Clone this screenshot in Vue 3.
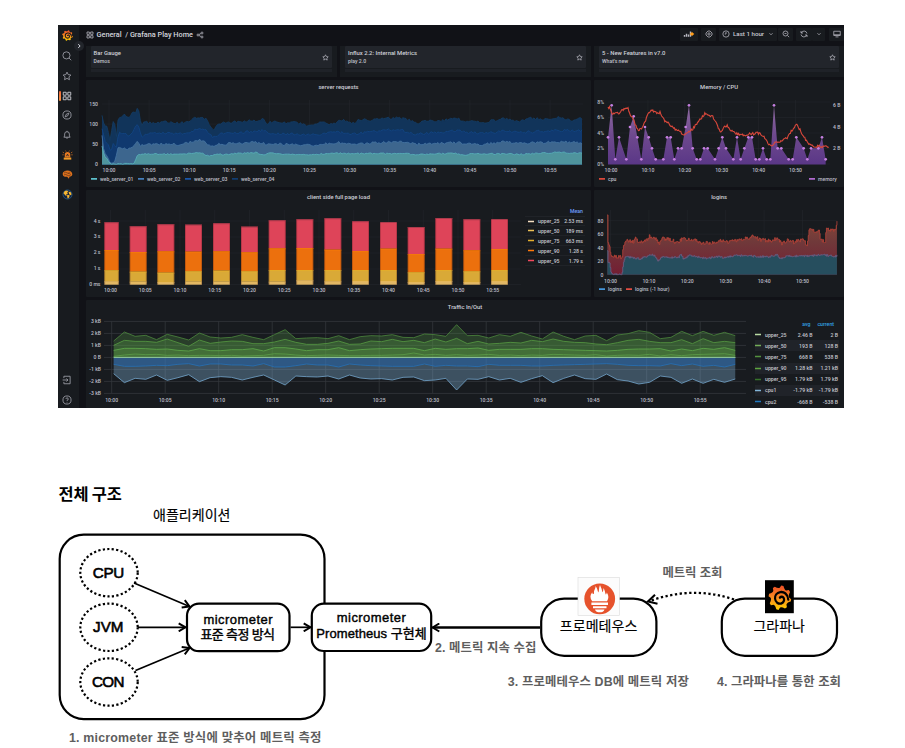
<script setup>
function noise(seed) {
  let s = seed
  return () => {
    s = (s * 16807) % 2147483647
    return s / 2147483647 - 0.5
  }
}
const pairs = (t) => t.trim().split(/\s+/).map((p) => p.split(',').map(Number))
const place = (pts, ox, oy) => pts.map(([x, y]) => [ox + x / 3, oy + y / 3])
function at(pts, x) {
  for (let i = 1; i < pts.length; i++) {
    if (x <= pts[i][0]) {
      const [a, b] = [pts[i - 1], pts[i]]
      return a[1] + ((b[1] - a[1]) * (x - a[0])) / (b[0] - a[0])
    }
  }
  return pts[pts.length - 1][1]
}
const line = (pts) => 'M' + pts.map(([x, y]) => x.toFixed(2) + ' ' + y.toFixed(2)).join('L')
const area = (pts, base) => line(pts) + `L${pts[pts.length - 1][0]} ${base}L${pts[0][0]} ${base}Z`
function rough(pts, step, amp, seed) {
  const r = noise(seed)
  const out = []
  const end = pts[pts.length - 1][0]
  for (let x = pts[0][0]; x <= end; x += step) out.push([x, at(pts, x) + r() * amp])
  return out
}
function steps(pts, base) {
  const out = []
  pts.forEach(([x, y], i) => {
    if (i) out.push([x, Math.min(base, out[out.length - 1][1])])
    out.push([x, Math.min(base, y)])
  })
  return out
}

/* server requests */
const serverShapes = [
  ['138,290 145,322 152,318 158,345 163,362 170,305 176,310 180,358 187,290 205,285 220,292 228,280 238,278 243,266 248,268 252,300 257,318 265,306 290,310 325,306 350,310 390,308 405,300 420,294 435,290 445,294 455,303 465,318 473,332 480,318 500,306 530,308 550,303 600,303 620,296 630,312 650,305 700,310 720,308 745,314 765,318 790,306 820,312 840,308 850,300 870,303 892,310 912,298 952,300 992,295 1032,293 1062,300 1082,310 1122,302 1152,302 1202,295 1227,306 1252,300 1277,310 1302,303 1342,297 1392,304 1422,293 1452,298 1512,292 1542,302 1567,293 1581,298', '#11345a', '#143d66'],
  ['138,330 148,365 158,375 165,400 172,370 180,385 188,340 205,338 215,348 230,340 243,312 248,320 256,350 270,340 380,341 405,334 430,325 450,330 473,353 490,342 540,338 620,332 640,340 765,344 850,337 900,342 992,329 1042,332 1080,343 1200,333 1280,341 1340,334 1400,337 1500,331 1581,332', '#10396f', '#134685'],
  ['138,350 145,405 152,404 160,428 175,430 185,385 205,384 215,390 235,380 243,360 252,378 270,371 380,373 405,366 432,360 450,368 470,380 490,373 600,366 630,372 765,376 850,368 900,373 992,366 1032,364 1080,373 1200,368 1280,373 1340,366 1400,371 1500,364 1581,369', '#3d668e', '#4676a5'],
  ['138,380 146,412 152,412 160,430 175,432 232,432 245,406 255,402 380,403 432,397 460,409 480,404 600,398 620,405 650,398 680,404 765,403 850,400 992,401 1032,400 1080,404 1200,400 1215,406 1250,401 1340,402 1400,403 1500,397 1581,400', '#4f949d', '#59b2bd'],
]
const server = serverShapes.map(([t, fill, stroke], i) => {
  const p = rough(place(pairs(t), 56, 20), 1.6, i === 3 ? 1.4 : 2.6, 77 + i * 31).map(([x, y]) => [x, Math.min(y, 164.3)])
  return { fill, stroke, area: area(p, 164.4), line: line(p) }
})
const serverTicks = Array.from({ length: 12 }, (_, i) => ({ x: 109 + i * 40.1, t: '10:' + String(i * 5).padStart(2, '0') }))
const serverLegend = [
  { x: 91, c: '#5cc0cb', t: 'web_server_01' },
  { x: 138, c: '#447ebc', t: 'web_server_02' },
  { x: 185, c: '#1a56a8', t: 'web_server_03' },
  { x: 232, c: '#113c70', t: 'web_server_04' },
]

/* memory and cpu */
const memory = place(pairs('54,352 65,256 76,418 87,352 109,418 120,321 131,289 142,352 154,418 165,321 176,352 186,385 197,418 220,418 231,352 242,352 253,418 264,385 275,385 287,321 297,256 308,385 320,418 331,418 342,385 353,385 375,418 386,385 397,352 408,385 430,418 441,352 452,418 463,385 475,352 486,352 497,418 508,418 519,385 530,418 541,418 552,256 563,385 574,385 596,418 608,418 619,352 641,385 652,418 663,385 685,385 696,352 707,418'), 590, 20)
const cpu = rough(place(pairs('54,265 60,260 65,282 75,278 85,282 100,268 112,262 120,280 130,300 142,330 155,328 165,305 172,285 185,270 200,280 210,278 222,300 235,310 250,325 265,330 280,345 290,340 305,330 315,318 330,300 345,280 355,285 370,292 380,312 392,338 400,322 412,318 425,332 440,342 460,345 480,342 500,340 512,340 525,355 535,372 545,378 560,365 575,362 590,355 600,340 610,325 620,313 630,330 645,355 655,370 675,378 690,380 718,380'), 590, 20), 0.8, 2.6, 911)
const memoryTicks = ['10:00', '10:10', '10:20', '10:30', '10:40', '10:50'].map((t, i) => ({ t, x: 611 + i * 36.9 }))

/* page load */
const lefts = [104.3, 129.7, 157.3, 185, 213, 241, 268.7, 296.3, 324.3, 352, 380, 407.7, 435.3, 463.3, 491]
const tops = [
  [112, 124, 118, 119, 115, 125, 106, 103, 100, 109, 111, 126, 99, 103, 102],
  [195, 201, 199, 200, 199, 202, 190, 189, 194, 198, 191, 207, 191, 196, 192],
  [256, 260, 263, 259, 257, 259, 255, 255, 255, 255, 255, 262, 255, 259, 255],
  [289, 290, 291, 290, 290, 290, 290, 286, 289, 288, 288, 291, 288, 291, 288],
]
const barFill = ['#de4459', '#ec700d', '#d9a937', '#e1b765']
const barEdge = ['#a83a4b', '#f57a08', '#e5ae2c', '#e5b75c']
const bars = lefts.flatMap((x, i) =>
  tops.map((row, k) => {
    const y = 185 + row[i] / 3
    const bottom = k < 3 ? 185 + tops[k + 1][i] / 3 : 284.7
    return { x, y, w: i ? 17 : 14.5, h: bottom - y, f: barFill[k], e: barEdge[k] }
  })
)
const loadTicks = Array.from({ length: 12 }, (_, i) => ({ x: 110.5 + i * 34.75, t: '10:' + String(i * 5).padStart(2, '0') }))
const loadRows = [
  ['#f5dfc3', 'upper_25', '2.53 ms'],
  ['#edbf55', 'upper_50', '189 ms'],
  ['#e5ae2c', 'upper_75', '663 ms'],
  ['#ff780a', 'upper_90', '1.28 s'],
  ['#f2495c', 'upper_95', '1.79 s'],
]

/* logins */
const hourAgo = steps(rough(place(pairs('52,95 53,175 58,182 62,210 68,215 95,217 99,190 105,165 120,168 130,172 136,158 142,168 165,170 178,153 190,158 200,165 206,178 215,160 245,165 260,175 275,162 295,165 310,162 330,176 370,172 395,166 410,172 435,166 470,160 490,154 510,164 540,168 560,160 575,176 595,165 610,172 640,163 650,185 655,148 658,132 675,140 686,133 691,165 705,172 708,134 738,135 740,108 742,118'), 590, 185), 0.7, 3.6, 313), 274.7)
const logins = steps(rough(place(pairs('52,200 53,232 58,232 62,262 68,268 95,270 101,225 108,216 130,218 150,222 175,211 192,210 204,229 215,217 265,217 273,208 280,222 296,212 350,221 385,214 400,219 440,211 480,213 530,216 560,210 570,222 590,214 640,213 700,210 735,214 742,209'), 590, 185), 0.7, 2, 522), 274.7)
const loginTicks = ['10:00', '10:10', '10:20', '10:30', '10:40', '10:50'].map((t, i) => ({ t, x: 610.5 + i * 38.4 }))

/* traffic */
const nums = (t) => t.split(' ').map(Number)
const u95 = nums('138 111 124 121 134 118 126 135 114 126 129 127 119 127 134 119 104 131 129 128 131 122 134 125 122 123 119 127 128 117 119 124 89 122 121 129 119 124 112 123 132 111 124 134 123 121 137 120 116 107 112 131 127 109 122 109 121 112 122')
const u90 = nums('151 136 139 139 142 132 143 154 135 145 141 138 139 146 146 141 133 142 148 148 145 138 148 147 138 140 133 140 136 143 132 141 130 146 139 147 145 142 144 136 140 132 139 142 143 147 149 143 136 133 139 143 143 134 146 131 143 139 143')
const u75 = nums('166 160 160 161 163 162 166 168 161 167 167 164 164 161 168 158 158 162 167 164 164 158 167 164 162 161 160 160 160 167 160 163 161 161 159 166 163 163 163 161 161 163 164 165 166 167 168 166 163 162 162 161 168 162 167 160 163 158 166')
const u50 = nums('184 180 177 179 178 181 180 182 181 181 182 181 183 182 181 176 177 180 182 181 180 181 182 182 181 181 180 179 174 180 178 181 179 181 180 178 181 180 182 180 181 178 179 180 181 179 183 181 180 181 178 183 179 182 179 178 177 176 181')
const col = (arr, f = (y) => y) => arr.map((y, i) => [113.67 + i * 10.717, 295 + f(y) / 3])
const flip = (y) => 374 - y
const traffic = [
  { p: col(u95), f: '#5a9e4a', o: 0.27, s: '#4d883e' },
  { p: col(u90), f: '#5a9e4a', o: 0.3, s: '#579a43' },
  { p: col(u75), f: '#5fa047', o: 0.3, s: '#5fa94b' },
  { p: col(u50), f: '#5fa047', o: 0.12, s: '#5c9d49' },
  { p: col(u95, flip), f: '#7fb2d8', o: 0.36, s: '#75a7ce' },
  { p: col(u75, flip), f: '#1f60a8', o: 0.5, s: '#2671b8' },
].map((t) => ({ ...t, area: area(t.p, 357.4), line: line(t.p) }))
const trafficTicks = Array.from({ length: 12 }, (_, i) => ({ x: 111.7 + i * 53.5, t: '10:' + String(i * 5).padStart(2, '0') }))
const trafficRows = [
  ['#b9dba3', 'upper_25', '2.46 B', '2 B'],
  ['#73ad58', 'upper_50', '193 B', '128 B'],
  ['#54923f', 'upper_75', '668 B', '538 B'],
  ['#5da53f', 'upper_90', '1.28 kB', '1.21 kB'],
  ['#37732b', 'upper_95', '1.79 kB', '1.79 kB'],
  ['#82b5d8', 'cpu1', '-1.79 kB', '-1.79 kB'],
  ['#1f78c1', 'cpu2', '-668 B', '-538 B'],
]

const cards = [
  { title: 'Bar Gauge', sub: 'Demos' },
  { title: 'Influx 2.2: Internal Metrics', sub: 'play 2.0' },
  { title: '5 - New Features in v7.0', sub: "What's new" },
]
const star = 'M8 1.8L9.9 5.8L14.2 6.4L11.1 9.5L11.9 13.9L8 11.8L4.1 13.9L4.9 9.5L1.8 6.4L6.1 5.8Z'
const apps = 'M2 2h4.7v4.7H2zM9.3 2H14v4.7H9.3zM2 9.3h4.7V14H2zM9.3 9.3H14V14H9.3z'
const nav = [
  { name: 'search', d: 'M12.8 7a5.7 5.7 0 1 1-11.4 0a5.7 5.7 0 0 1 11.4 0M11.3 11.3L14.8 14.8' },
  { name: 'star', d: star },
  { name: 'apps', d: apps, on: true },
  { name: 'compass', d: 'M14.5 8a6.5 6.5 0 1 1-13 0a6.5 6.5 0 0 1 13 0M11 5L9.2 9.2L5 11L6.8 6.8Z' },
  { name: 'bell', d: 'M3 11.5H13L11.8 9.5V6.5a3.8 3.8 0 0 0-7.6 0V9.5ZM8 1.3V2.7M6.3 12a1.8 1.8 0 0 0 3.4 0' },
]
const foot = [
  { name: 'signin', d: 'M3 5V2H13V14H3V11M1 8H9.5M7 5.5L9.5 8L7 10.5' },
  { name: 'help', d: 'M14.5 8a6.5 6.5 0 1 1-13 0a6.5 6.5 0 0 1 13 0M6.2 6.3a1.9 1.9 0 1 1 1.9 2.1V9.3M8 11V12' },
]

/* grafana mark in a 32 unit box */
const gear = (() => {
  const n = 8
  let d = ''
  for (let i = 0; i < n; i++) {
    const a = (i * 2 * Math.PI) / n - 1.35
    const pt = (r, k) => (16 + r * Math.cos(a + k)).toFixed(1) + ' ' + (16 + r * Math.sin(a + k)).toFixed(1)
    d += (i ? 'L' : 'M') + pt(15.6, -0.1) + 'L' + pt(15.6, 0.1) + 'Q' + pt(11.4, 0.36) + ' ' + pt(12.6, 0.55)
  }
  return d + 'Z'
})()
const swirl = 'M27.5 18.5C27 11.5 21.5 8.2 16.5 9C11.5 9.8 9 13.5 9.4 17.4C9.9 21.8 13.8 24.3 17.6 23.4C21 22.5 22.5 19.5 21.4 16.8C20.4 14.6 17.6 14.2 16 16'
</script>

<template>
  <main class="page">
    <section class="dash">
      <svg class="defs" width="0" height="0">
        <defs>
          <linearGradient id="flame" x1="0" y1="1" x2="0" y2="0">
            <stop offset="0" stop-color="#ffd000" /><stop offset=".5" stop-color="#f78a20" /><stop offset="1" stop-color="#f04e28" />
          </linearGradient>
          <linearGradient id="mem" x1="0" y1="0" x2="0" y2="1">
            <stop offset="0" stop-color="#a57ab9" stop-opacity=".85" /><stop offset=".5" stop-color="#7d51a1" stop-opacity=".85" /><stop offset="1" stop-color="#5d388c" stop-opacity=".95" />
          </linearGradient>
          <linearGradient id="log" x1="0" y1="0" x2="0" y2="1">
            <stop offset="0" stop-color="#95503c" stop-opacity=".85" /><stop offset=".45" stop-color="#70393a" /><stop offset="1" stop-color="#731e33" />
          </linearGradient>
        </defs>
      </svg>
      <aside class="side">
        <div class="brand">
          <svg width="11" height="11" viewBox="0 0 32 32"><path :d="gear" fill="url(#flame)" /><path :d="swirl" class="swirl" /></svg>
          <i class="expand"><svg width="6" height="6" viewBox="0 0 8 8"><path d="M3 1.5L5.5 4L3 6.5" /></svg></i>
        </div>
        <div v-for="n in nav" :key="n.name" class="item" :class="{ on: n.on }">
          <svg class="glyph" width="10" height="10" viewBox="0 0 16 16"><path :d="n.d" /></svg>
        </div>
        <div class="item">
          <svg width="11" height="11" viewBox="0 0 16 16">
            <path d="M4 11V7a4 4 0 0 1 8 0V11Z" fill="#e87a21" /><path d="M2.5 11H13.5V14H2.5Z" fill="#f19b28" /><path d="M1 3L3 4.3M15 3L13 4.3M.5 7H2.5M15.5 7H13.5M5 .8L6 2.3M11 .8L10 2.3" stroke="#e87a21" /><path d="M6.5 9L8 6L9.5 9" stroke="#22252b" stroke-width="1.2" fill="none" />
          </svg>
        </div>
        <div class="item">
          <svg width="11" height="11" viewBox="0 0 16 16">
            <path d="M1 7C1 4 4 2 8 2S15 4 15 7.5C15 10 13 11 11 11L10 14L7.5 11.2H4C2 11 1 9 1 7Z" fill="#dd711d" /><path d="M3 6Q5 3.5 7 5.5T11 4.5M3 8.5Q5.5 7 7.5 9T13 8M9 6.5L12 6" stroke="#4a2b18" stroke-width=".9" fill="none" />
          </svg>
        </div>
        <div class="item">
          <svg width="11" height="11" viewBox="0 0 16 16">
            <circle cx="8" cy="8" r="6.6" fill="#16233b" stroke="#2869a0" /><path d="M2.2 6L4 3L7.5 2L9 3.5L7.5 5L8.5 7L6 8L7 10L5 9.5ZM9.5 4L12.5 4.5L14 7.5L12.5 9L10.5 7.5ZM7.5 8.5L11 9L10.5 12L8.5 14L7.5 11.5Z" fill="#f6b631" />
          </svg>
        </div>
        <div class="foot">
          <div v-for="n in foot" :key="n.name" class="item">
            <svg class="glyph" width="10" height="10" viewBox="0 0 16 16"><path :d="n.d" /></svg>
          </div>
        </div>
      </aside>

      <div class="main">
        <header class="top">
          <svg class="ico" width="8" height="8" viewBox="0 0 16 16"><path :d="apps" /></svg>
          <span class="crumb">General&nbsp; / Grafana Play Home</span>
          <svg class="ico share" width="8" height="8" viewBox="0 0 16 16"><path d="M6 8a2 2 0 1 1-4 0a2 2 0 0 1 4 0M14 4a2 2 0 1 1-4 0a2 2 0 0 1 4 0M14 12a2 2 0 1 1-4 0a2 2 0 0 1 4 0M6 7L10 5M6 9L10 11" /></svg>
          <div class="tools">
            <span class="btn w18"><svg width="12" height="8" viewBox="0 0 24 16"><path d="M3 13.5V10M7 13.5V7.5M11 13.5V9M15 13.5V3" /><path class="gem" d="M18 4L22.5 8L18 12L13.5 8Z" /></svg></span>
            <span class="btn w15"><svg width="8" height="8" viewBox="0 0 16 16"><path d="M6 2H10L14 6V10L10 14H6L2 10V6ZM10.3 8a2.3 2.3 0 1 1-4.6 0a2.3 2.3 0 0 1 4.6 0" /></svg></span>
            <span class="btn time"><svg width="8" height="8" viewBox="0 0 16 16"><path d="M14.3 8a6.3 6.3 0 1 1-12.6 0a6.3 6.3 0 0 1 12.6 0M8 4V8H5.5" /></svg><b>Last 1 hour</b><svg width="6" height="6" viewBox="0 0 12 12"><path d="M3 4.5L6 7.5L9 4.5" /></svg></span>
            <span class="btn w14"><svg width="8" height="8" viewBox="0 0 16 16"><path d="M12 7a5 5 0 1 1-10 0a5 5 0 0 1 10 0M11 11L14.3 14.3M5 7H9" /></svg></span>
            <span class="btn w16"><svg width="8" height="8" viewBox="0 0 16 16"><path d="M2 2V6H6M14 14V10H10M2.5 6A6 6 0 0 1 14 7M13.5 10A6 6 0 0 1 2 9" /></svg></span>
            <span class="btn w13"><svg width="6" height="6" viewBox="0 0 12 12"><path d="M3 4.5L6 7.5L9 4.5" /></svg></span>
            <span class="btn w14 last"><svg width="8" height="8" viewBox="0 0 16 16"><path d="M1.5 2.5H14.5V11H1.5ZM5 13.8H11M1.5 9.5H14.5" /></svg></span>
          </div>
        </header>

        <div class="cards">
          <div v-for="(c, i) in cards" :key="c.title" class="card" :class="'card' + i">
            <div class="link">
              <div><p>{{ c.title }}</p><small>{{ c.sub }}</small></div>
              <svg width="7" height="7" viewBox="0 0 16 16"><path :d="star" /></svg>
            </div>
            <div class="next"></div>
          </div>
        </div>

        <div class="grid">
          <article class="panel">
            <h3>server requests</h3>
            <svg width="505" height="93" viewBox="86 94 505 93">
              <g class="rule">
                <path v-for="y in [104, 124.1, 144.2, 164.3]" :key="y" :d="`M102 ${y}H583`" />
                <path v-for="t in serverTicks" :key="t.x" :d="`M${t.x} 100V164`" />
              </g>
              <g v-for="s in server" :key="s.fill"><path :d="s.area" :fill="s.fill" /><path :d="s.line" :stroke="s.stroke" class="thin" /></g>
              <g class="tick end"><text v-for="(v, i) in [150, 100, 50, 0]" :key="v" x="98" :y="105.6 + i * 20.1">{{ v }}</text></g>
              <g class="tick mid"><text v-for="t in serverTicks" :key="t.t" :x="t.x" y="172">{{ t.t }}</text></g>
              <g v-for="l in serverLegend" :key="l.t" class="tick"><path :d="`M${l.x} 178.9h6`" :stroke="l.c" stroke-width="1.8" /><text :x="l.x + 9" y="180.6" textLength="33.5">{{ l.t }}</text></g>
            </svg>
          </article>

          <article class="panel">
            <h3>Memory / CPU</h3>
            <svg width="250" height="93" viewBox="594 94 250 93">
              <g class="rule">
                <path v-for="y in [102, 117.5, 133, 148.5, 164]" :key="y" :d="`M608 ${y}H830`" />
                <path v-for="t in memoryTicks" :key="t.x" :d="`M${t.x} 100V164`" />
              </g>
              <path :d="area(memory, 164.5)" fill="url(#mem)" />
              <circle v-for="(p, i) in memory" :key="i" :cx="p[0]" :cy="p[1]" r="1.35" fill="#c57fe0" />
              <path :d="line(cpu)" stroke="#d9483b" fill="none" stroke-width="1.1" />
              <g class="tick end"><text v-for="(v, i) in ['8%', '6%', '4%', '2%', '0%']" :key="v" x="604" :y="103.8 + i * 15.5">{{ v }}</text></g>
              <g class="tick"><text v-for="(v, i) in ['6 B', '4 B', '2 B']" :key="v" x="833" :y="107 + i * 21.5">{{ v }}</text></g>
              <g class="tick mid"><text v-for="t in memoryTicks" :key="t.t" :x="t.x" y="172">{{ t.t }}</text></g>
              <g class="tick"><path d="M599 178.9h6" stroke="#d9483b" stroke-width="1.8" /><text x="608" y="180.8">cpu</text><path d="M809 178.9h6" stroke="#b06bd0" stroke-width="1.8" /><text x="818" y="180.8">memory</text></g>
            </svg>
          </article>

          <article class="panel">
            <h3>client side full page load</h3>
            <div class="split">
              <svg width="439" height="93" viewBox="86 204 439 93">
                <g class="rule">
                  <path v-for="y in [221, 237, 253, 269, 284.5]" :key="y" :d="`M104 ${y}H521`" />
                  <path v-for="t in loadTicks" :key="t.x" :d="`M${t.x} 210V284`" />
                </g>
                <g v-for="(b, i) in bars" :key="i"><rect :x="b.x" :y="b.y" :width="b.w" :height="b.h" :fill="b.f" /><rect :x="b.x" :y="b.y" :width="b.w" height=".9" :fill="b.e" /><path :d="`M${b.x + 0.4} ${b.y}v${b.h}M${b.x + b.w - 0.4} ${b.y}v${b.h}`" stroke="#43151a" stroke-opacity=".35" stroke-width=".8" /></g>
                <g class="tick end"><text v-for="(v, i) in ['4 s', '3 s', '2 s', '1 s', '0 ms']" :key="v" x="100.5" :y="222.6 + i * 15.8">{{ v }}</text></g>
                <g class="tick mid"><text v-for="t in loadTicks" :key="t.t" :x="t.x" y="292">{{ t.t }}</text></g>
              </svg>
              <div class="table load">
                <div class="row head"><span></span><span></span><span>Mean</span></div>
                <div v-for="r in loadRows" :key="r[1]" class="row"><svg width="6" height="3" viewBox="0 0 6 3"><path d="M0 1.5H6" :stroke="r[0]" stroke-width="1.7" /></svg><span>{{ r[1] }}</span><span>{{ r[2] }}</span></div>
              </div>
            </div>
          </article>

          <article class="panel">
            <h3>logins</h3>
            <svg width="250" height="93" viewBox="594 204 250 93">
              <g class="rule">
                <path v-for="y in [220.7, 234.2, 247.7, 261.2, 274.7]" :key="y" :d="`M607 ${y}H837`" />
                <path v-for="t in loginTicks" :key="t.x" :d="`M${t.x} 210V274`" />
              </g>
              <path :d="area(hourAgo, 274.7)" fill="url(#log)" /><path :d="line(hourAgo)" class="thin" stroke="#b9443a" />
              <path :d="area(logins, 274.7)" fill="#264e5e" /><path :d="line(logins)" class="thin" stroke="#6c6186" />
              <g class="tick end"><text v-for="(v, i) in [80, 60, 40, 20, 0]" :key="v" x="603.3" :y="222.5 + i * 13.5">{{ v }}</text></g>
              <g class="tick mid"><text v-for="t in loginTicks" :key="t.t" :x="t.x" y="282.8">{{ t.t }}</text></g>
              <g class="tick"><path d="M599 289.2h6" stroke="#4597dc" stroke-width="1.8" /><text x="608" y="291">logins</text><path d="M626 289.2h6" stroke="#e24d42" stroke-width="1.8" /><text x="635" y="291" textLength="34.5">logins (-1 hour)</text></g>
            </svg>
          </article>

          <article class="panel wide">
            <h3>Traffic In/Out</h3>
            <div class="split">
              <svg width="669" height="94" viewBox="86 314 669 94">
                <g class="rule strong">
                  <path v-for="i in 7" :key="i" :d="`M104 ${309.4 + i * 12}H746`" />
                  <path v-for="t in trafficTicks" :key="t.x" :d="`M${t.x} 321.4V393.4`" />
                </g>
                <g v-for="(s, i) in traffic" :key="i"><path :d="s.area" :fill="s.f" :fill-opacity="s.o" /><path :d="s.line" :stroke="s.s" class="thin" /></g>
                <path d="M113.7 357.4H735.5" stroke="#9cd6a3" stroke-width=".9" />
                <g class="tick end"><text v-for="(v, i) in ['3 kB', '2 kB', '1 kB', '0 B', '-1 kB', '-2 kB', '-3 kB']" :key="v" x="101" :y="323.2 + i * 12">{{ v }}</text></g>
                <g class="tick mid"><text v-for="t in trafficTicks" :key="t.t" :x="t.x" y="401.5">{{ t.t }}</text></g>
              </svg>
              <div class="table flow">
                <div class="row head"><span></span><span></span><span>avg</span><span>current</span></div>
                <div v-for="r in trafficRows" :key="r[1]" class="row"><svg width="6" height="3" viewBox="0 0 6 3"><path d="M0 1.5H6" :stroke="r[0]" stroke-width="1.7" /></svg><span>{{ r[1] }}</span><span>{{ r[2] }}</span><span>{{ r[3] }}</span></div>
              </div>
            </div>
          </article>
        </div>
      </div>
    </section>

    <h2>전체 구조</h2>

    <svg class="diagram" width="905" height="242" viewBox="0 506 905 242">
      <defs>
        <marker id="tip" viewBox="0 0 10 10" refX="9" refY="5" markerWidth="10" markerHeight="10" markerUnits="userSpaceOnUse" orient="auto">
          <path d="M2.2 1L9 5L2.2 9" fill="none" stroke="#000" stroke-width="2" />
        </marker>
      </defs>
      <rect class="box" x="59.7" y="534.7" width="264.8" height="184.4" rx="24" />
      <g class="dots">
        <ellipse cx="109" cy="572.7" rx="28.7" ry="23.7" /><ellipse cx="109" cy="627.3" rx="28.7" ry="23.7" /><ellipse cx="109" cy="682" rx="28.7" ry="23.7" />
      </g>
      <rect class="box" x="187" y="603.7" width="102.5" height="47.5" rx="12" />
      <rect class="box" x="311.8" y="603.7" width="119.4" height="47.3" rx="12" />
      <rect class="box" x="541.2" y="598.6" width="115.2" height="57.2" rx="23" />
      <rect class="box" x="721.8" y="598.6" width="115.2" height="57.2" rx="23" />
      <g class="arrow">
        <path d="M134 583L189.5 606.5" /><path d="M138 627.3H185.5" /><path d="M135.5 670.5L189.5 648" /><path d="M290.5 627.3H310.5" />
        <path class="heavy" d="M540 627.5H432.5" />
        <path class="dotted" d="M734 599.5Q692 585.5 650 601" />
      </g>
      <path d="M655 594.8L648 601.5L657.5 603.8" fill="none" stroke="#000" stroke-width="2.1" />

      <rect x="578" y="577.5" width="41.5" height="38" fill="#fcfcfc" stroke="#dadada" stroke-width=".6" />
      <circle cx="599.7" cy="598.8" r="15.4" fill="#e6522c" />
      <path d="M592.2 601.2C589.8 598 589.9 595 592.2 592.2C592.6 594.6 594 594.8 594 592.4C593.8 590 596 588.8 595.4 586C597.6 588 597.4 591 598.4 592.6C599.3 590.5 598.6 588 600 585C601 588 602.2 589 602.2 592.2C603.6 591 603.4 589.4 603.2 588C605 590 605 592.8 605.7 594.6C606.5 594.4 606.6 593.5 606.7 592.6C609.2 596 608.6 599 607 601.2Z" fill="#fff" />
      <path d="M591.4 602.4H608V605H591.4ZM593 606.2H606.5V608.2H593ZM595 609.4H604.5C603.8 613.2 595.7 613.2 595 609.4Z" fill="#fff" />

      <rect x="765" y="580.2" width="28.8" height="33" fill="#000" />
      <g transform="translate(768.2 585) scale(.73 .79)"><path :d="gear" fill="url(#flame)" /><path :d="swirl" class="swirl black" /></g>

      <g class="label">
        <text x="153" y="520.3" textLength="77.5" class="ko">애플리케이션</text>
        <text x="92.7" y="578" textLength="31.5" class="big">CPU</text>
        <text x="93" y="632.4" textLength="30.5" class="big">JVM</text>
        <text x="92" y="687" textLength="32.5" class="big">CON</text>
        <text x="203.5" y="623.5" textLength="69">micrometer</text>
        <text x="200.5" y="639.4" textLength="74.5">표준 측정 방식</text>
        <text x="336.8" y="622" textLength="69">micrometer</text>
        <text x="316.3" y="638.1" textLength="110.5">Prometheus 구현체</text>
        <text x="559.8" y="631.2" textLength="77.5" class="ko">프로메테우스</text>
        <text x="753.5" y="631.2" textLength="51.5" class="ko">그라파나</text>
      </g>
      <g class="note">
        <text x="69" y="741.5" textLength="252.5">1. micrometer 표준 방식에 맞추어 메트릭 측정</text>
        <text x="435" y="652.2" textLength="101.5">2. 메트릭 지속 수집</text>
        <text x="507.8" y="686" textLength="181">3. 프로메테우스 DB에 메트릭 저장</text>
        <text x="717" y="686" textLength="124">4. 그라파나를 통한 조회</text>
        <text x="662.5" y="576.8" textLength="60">메트릭 조회</text>
      </g>
    </svg>
  </main>
</template>

<style>
body { margin: 0; background: #fff; }
</style>

<style scoped>
.page { width: 905px; height: 748px; overflow: hidden; padding-top: 25px; box-sizing: border-box; background: #fff; font-family: Roboto, sans-serif; }
.defs { position: absolute; }
.dash { display: flex; width: 786px; height: 383px; margin-left: 58px; background: #111217; color: #c9cad2; overflow: hidden; }
.side { width: 21px; display: flex; flex-direction: column; background: #181b1f; flex: none; }
.brand { position: relative; height: 21px; width: 18.5px; display: flex; align-items: center; justify-content: center; }
.expand { position: absolute; left: 16px; top: 15.5px; width: 10px; height: 10px; border-radius: 50%; background: #22252b; display: flex; align-items: center; justify-content: center; }
.expand path { fill: none; stroke: #dcdde4; stroke-width: 1.3; }
.swirl { fill: none; stroke: #181b1f; stroke-width: 3; stroke-linecap: round; }
.swirl.black { stroke: #000; }
.item { height: 19.85px; width: 18.5px; display: flex; align-items: center; justify-content: center; }
.glyph path { fill: none; stroke: #9a9ca5; stroke-width: 1.4; }
.item.on { position: relative; }
.item.on path { stroke: #d2d3da; }
.item.on::before { content: ''; position: absolute; left: 1px; top: 5px; width: 1.8px; height: 10px; background: linear-gradient(#f2683a, #f79441); border-radius: 1px; }
.foot { margin-top: auto; display: flex; flex-direction: column; gap: 4px; }
.foot .item { height: 16px; }
.main { flex: 1; padding-left: 7px; min-width: 0; }
.top { height: 21px; display: flex; align-items: center; box-sizing: border-box; }
.ico { margin-top: -2px; flex: none; }
.ico path, .btn path { fill: none; stroke: #b9bac3; stroke-width: 1.5; }
.crumb { margin: -2px 0 0 2.5px; font-size: 7.3px; font-weight: 500; line-height: 9px; width: 97px; white-space: nowrap; color: #d3d4dc; letter-spacing: 0; }
.share { margin-left: 2px; }
.tools { margin-left: auto; display: flex; margin-top: -2.5px; }
.btn { height: 13.5px; margin-right: 3px; background: #181b1f; display: flex; align-items: center; justify-content: center; border-radius: 1px; box-sizing: border-box; }
.btn b { font-size: 6.2px; font-weight: 500; letter-spacing: 0; white-space: nowrap; }
.time { width: 58px; gap: 3px; margin-right: 1px; }
.time svg:last-child { margin-left: 1px; }
.w18 path { stroke-width: 2.8; }
.btn .gem { fill: #ff9c1a; stroke: none; }
.w18 { width: 18px; } .w15 { width: 15px; } .w14 { width: 15px; } .w16 { width: 16px; margin-right: 0; } .w13 { width: 13px; margin-right: 4px; }
.last { margin-right: 0; }
.cards { display: grid; grid-template-columns: 251px 251px 250px; gap: 3px; height: 31px; }
.card { background: #181b1f; padding: 0 5px; }
.link { height: 22px; background: #22252b; display: flex; align-items: center; justify-content: space-between; padding: 0 3px; border-radius: 1px; }
.link p { margin: 0; font-size: 5.9px; line-height: 8px; font-weight: 500; color: #cfd0d8; }
.link small { display: block; font-size: 5.2px; line-height: 8px; font-weight: 500; color: #c0c1ca; }
.link path { fill: none; stroke: #c0c1ca; stroke-width: 1.5; }
.link > div { margin-top: -1px; }
.card0 .link > div { margin-left: -.5px; }
.next { height: 3px; margin-top: 1.4px; background: #1f2228; }
.grid { margin-top: 3px; display: grid; grid-template-columns: 505px 250px; grid-template-rows: 107px 107px 108px; gap: 3px; }
.panel { background: #181b1f; display: flex; flex-direction: column; overflow: hidden; border-radius: 1px; }
.wide { grid-column: span 2; }
.panel h3 { margin: 0; height: 14px; line-height: 14px; text-align: center; font-size: 5.8px; font-weight: 500; color: #d0d1d9; flex: none; }
.panel svg { display: block; flex: none; }
.split { display: flex; }
.rule { stroke: #24272b; stroke-width: .6; fill: none; }
.strong { stroke: #34373b; stroke-width: .8; }
.thin { fill: none; stroke-width: .8; }
.tick text { font-size: 5.1px; font-weight: 500; fill: #bebfc8; }
.end { text-anchor: end; }
.mid { text-anchor: middle; }
.table { font-size: 5.2px; font-weight: 500; color: #c5c6ce; }
.row { display: grid; align-items: center; box-sizing: border-box; white-space: nowrap; }
.row span:nth-child(n + 3) { text-align: right; }
.load { width: 60px; padding-top: 2.6px; }
.load .row { height: 9.95px; grid-template-columns: 10px 24px 1fr; padding: 0 2px 0 3px; border-bottom: .6px solid #202328; }
.load .head { color: #6e9fff; }
.flow { width: 84px; padding-top: 4px; }
.flow .row { height: 11.15px; grid-template-columns: 10px 22px 1fr 25.5px; padding: 0 1px 0 0; }
.flow .row:nth-child(odd) { background: #202329; }
.flow .head.row { color: #33a2e5; background: none; }
.flow .head span:last-child { margin-right: 4px; }
.flow .head span:nth-child(3) { margin-right: 2px; }
h2 { margin: 73px 0 0 58.5px; height: 25px; font: 700 16.4px/24px 'Noto Sans CJK KR', sans-serif; letter-spacing: -.2px; color: #000; }
.diagram { display: block; }
.box { fill: #fff; stroke: #000; stroke-width: 2.2; }
.dots { fill: none; stroke: #000; stroke-width: 2.2; stroke-dasharray: 2.2 2.3; }
.arrow path { fill: none; stroke: #000; stroke-width: 1.7; marker-end: url(#tip); }
.arrow .heavy { stroke-width: 2.3; }
.arrow .dotted { stroke-width: 2.3; stroke-dasharray: 2.3 2.5; marker-end: none; }
.label text { font: 400 13px 'Liberation Sans', 'Noto Sans CJK KR', sans-serif; fill: #000; stroke: #000; stroke-width: .4px; }
.label .big { font-size: 15.2px; stroke-width: .6px; }
.label .ko { font-size: 14px; stroke-width: .15px; }
.note text { font: 700 12.4px 'Liberation Sans', 'Noto Sans CJK KR', sans-serif; fill: #5e5e5e; }
</style>
